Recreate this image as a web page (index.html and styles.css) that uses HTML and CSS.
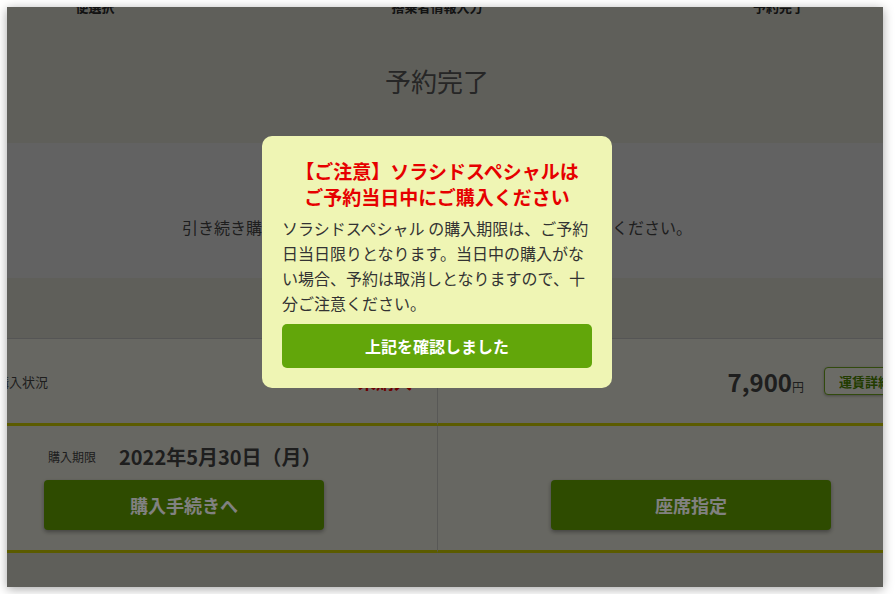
FILE: index.html
```html
<!DOCTYPE html>
<html lang="ja">
<head>
    <meta charset="utf-8">
    <meta name="viewport" content="width=device-width, initial-scale=1">
    <title>予約完了</title>
    <link rel="stylesheet" href="styles.css">
</head>
<body>

<div class="window">
    <div class="page">
        <ol class="steps">
            <li>便選択</li>
            <li>搭乗者情報入力</li>
            <li>予約完了</li>
        </ol>

        <h1 class="page-title">予約完了</h1>

        <section class="notice">
            <p>引き続き購入手続きへお進みいただき、お支払いを完了してください。</p>
        </section>

        <div class="summary">
            <div class="cell cell-left status">
                <span class="status-label">購入状況</span>
                <span class="status-value">未購入</span>
            </div>
            <div class="cell fare">
                <span class="fare-amount">7,900<small>円</small></span>
                <button class="fare-detail">運賃詳細</button>
            </div>
            <div class="cell cell-left action">
                <div class="deadline">
                    <span class="deadline-label">購入期限</span>
                    <span class="deadline-date">2022年5月30日（月）</span>
                </div>
                <button class="btn-primary">購入手続きへ</button>
            </div>
            <div class="cell action action-seat">
                <button class="btn-primary">座席指定</button>
            </div>
        </div>
    </div>

    <div class="overlay">
        <div class="modal">
            <h2 class="modal-title">【ご注意】ソラシドスペシャルは<br>ご予約当日中にご購入ください</h2>
            <p class="modal-text">ソラシドスペシャル の購入期限は、ご予約日当日限りとなります。当日中の購入がない場合、予約は取消しとなりますので、十分ご注意ください。</p>
            <button class="modal-button">上記を確認しました</button>
        </div>
    </div>
</div>

</body>
</html>
```

FILE: styles.css
```css
body {
    margin: 0;
    background: #ffffff;
    font-family: "Noto Sans CJK JP", "Noto Sans", sans-serif;
}

.window {
    position: relative;
    width: 876px;
    height: 580px;
    margin: 7px;
    overflow: hidden;
    background: #b0b0a7;
    box-shadow: 0 2px 10px rgba(0, 0, 0, 0.35);
}

.steps {
    list-style: none;
    margin: -9px 0 0;
    padding: 0;
    width: 860px;
    display: grid;
    grid-template-columns: 176px 1fr 176px;
    font-size: 13px;
    line-height: 18px;
    font-weight: bold;
    color: #222222;
    text-align: center;
}

.page-title {
    margin: 47px 0 0;
    width: 860px;
    text-align: center;
    font-size: 26px;
    line-height: 36px;
    font-weight: normal;
    color: #464646;
}

.notice {
    margin-top: 44px;
    height: 135px;
    box-sizing: border-box;
    padding-top: 72px;
    background: #b6b6b6;
}

.notice p {
    margin: 0;
    width: 860px;
    text-align: center;
    font-size: 16px;
    line-height: 24px;
    color: #383838;
}

.summary {
    margin: 60px 0 0 -76px;
    width: 1013px;
    display: grid;
    grid-template-columns: 507px 506px;
    border-top: 1px solid #9d9d9d;
    background: #bfbfb5;
}

.cell {
    box-sizing: border-box;
    display: flex;
    align-items: center;
    border-bottom: 3px solid #a8a800;
}

.cell-left {
    border-right: 1px solid #a3a39f;
}

.status {
    height: 87px;
    padding: 0 25px 0 65px;
    justify-content: space-between;
}

.status-label {
    font-size: 13px;
    color: #383838;
}

.status-value {
    font-size: 18px;
    font-weight: bold;
    color: #cc0000;
}

.fare {
    height: 87px;
    padding-right: 38px;
    justify-content: flex-end;
}

.fare-amount {
    font-size: 24px;
    font-weight: bold;
    color: #383838;
}

.fare-amount small {
    font-size: 12px;
    font-weight: normal;
}

.fare-detail {
    margin-left: 20px;
    height: 28px;
    padding: 0 14px;
    border: 1px solid #5c8a18;
    border-radius: 4px;
    background: #c6c6bd;
    color: #3f7000;
    font-family: inherit;
    font-size: 13px;
    font-weight: bold;
    box-shadow: 0 1px 3px rgba(0, 0, 0, 0.3);
}

.action {
    height: 127px;
    flex-direction: column;
    align-items: flex-start;
    padding: 16px 0 0 113px;
}

.action-seat {
    padding-top: 54px;
}

.deadline {
    display: flex;
    align-items: center;
    height: 28px;
    padding-left: 4px;
    margin-bottom: 10px;
}

.deadline-label {
    font-size: 12px;
    color: #383838;
    margin-right: 23px;
}

.deadline-date {
    font-size: 20px;
    font-weight: bold;
    color: #383838;
}

.btn-primary {
    width: 280px;
    height: 50px;
    border: 0;
    border-radius: 4px;
    background: #558b00;
    color: #eeeeee;
    font-family: inherit;
    font-size: 18px;
    font-weight: bold;
    box-shadow: 0 2px 4px rgba(0, 0, 0, 0.35);
}

.overlay {
    position: absolute;
    top: 0;
    right: 0;
    bottom: 0;
    left: 0;
    display: flex;
    justify-content: center;
    align-items: flex-start;
    padding: 129px 16px 0 0;
    background: rgba(0, 0, 0, 0.46);
}

.modal {
    width: 350px;
    box-sizing: border-box;
    padding: 22px 20px 20px;
    background: #eff5b4;
    border-radius: 10px;
}

.modal-title {
    margin: 0;
    font-size: 19px;
    line-height: 26px;
    font-weight: bold;
    color: #e60000;
    text-align: center;
}

.modal-text {
    margin: 6px 0 0;
    font-size: 16px;
    line-height: 25px;
    color: #333333;
}

.modal-button {
    display: block;
    width: 100%;
    height: 44px;
    margin-top: 8px;
    border: 0;
    border-radius: 5px;
    background: #62a60a;
    color: #ffffff;
    font-family: inherit;
    font-size: 16px;
    font-weight: bold;
}
```
